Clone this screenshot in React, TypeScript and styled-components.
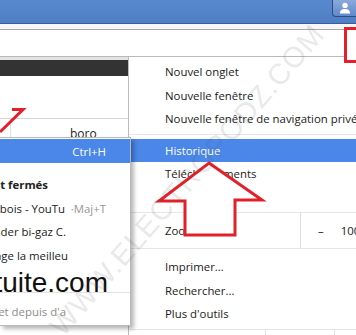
import React from "react";
import styled, { createGlobalStyle } from "styled-components";

const GlobalStyle = createGlobalStyle`
  html, body {
    margin: 0;
    padding: 0;
    background: #fff;
  }
  body {
    font-family: "Open Sans", "Noto Sans", sans-serif;
  }
`;

const MENU_FONT = 11.4;

const Window = styled.div`
  position: relative;
  width: 356px;
  height: 335px;
  overflow: hidden;
  background: #fff;
  display: flex;
  flex-direction: column;
`;

const TitleBar = styled.div`
  flex: none;
  height: 23px;
  display: flex;
  justify-content: flex-end;
  background: linear-gradient(#5888cd, #4f7ec5);
  border-bottom: 1px solid #3a5e98;
`;

const ProfileButton = styled.div`
  width: 24px;
  height: 16px;
  margin-right: -2px;
  display: flex;
  align-items: center;
  justify-content: center;
  background: linear-gradient(#8aa9dc, #6189c9);
  border: 1px solid #2c4c82;
  border-top: none;
  border-radius: 0 0 0 4px;
`;

const Toolbar = styled.div`
  flex: none;
  height: 33px;
  padding-top: 5px;
  box-sizing: border-box;
  background: #f6f7f9;
`;

const Omnibox = styled.div`
  height: 28px;
  box-sizing: border-box;
  background: #fff;
  border-top: 1px solid #a9a9a9;
  border-bottom: 1px solid #b9b9b9;
`;

const Body = styled.div`
  flex: 1;
  display: flex;
  min-height: 0;
`;

const Page = styled.div`
  flex: none;
  width: 128px;
  display: flex;
  flex-direction: column;
  background: #fff;
`;

const PageBand = styled.div`
  height: 3px;
  background: #e4e4e4;
`;

const PageHeader = styled.div`
  height: 16px;
  background: #333;
`;

const PageBlank = styled.div`
  height: 42px;
`;

const PageTable = styled.div`
  display: flex;
  border-top: 1px solid #d6d6d6;
  height: 40px;
`;

const PageCell = styled.div`
  width: 10px;
  border-right: 1px solid #e2e2e2;
`;

const PageText = styled.div`
  padding: 6px 0 0 59px;
  font-size: 12px;
  color: #222;
`;

const Menu = styled.div`
  flex: 1;
  display: flex;
  flex-direction: column;
  padding-top: 3px;
  border-left: 1px solid #bcbcbc;
  background: #fff;
  font-size: ${MENU_FONT}px;
  color: #1b1b1b;
`;

const MenuItem = styled.div<{ $active?: boolean }>`
  flex: none;
  height: 23.5px;
  display: flex;
  align-items: center;
  padding-left: 36px;
  white-space: nowrap;
  color: ${(p) => (p.$active ? "#fff" : "#1b1b1b")};
  background: ${(p) => (p.$active ? "#4a87e8" : "transparent")};
`;

const Separator = styled.div<{ $after: number }>`
  flex: none;
  height: 1px;
  background: #e6e6e6;
  margin: 3px 0 ${(p) => p.$after}px;
`;

const ZoomRow = styled.div`
  flex: none;
  height: 35px;
  display: flex;
  border-bottom: 1px solid #e6e6e6;
  margin-bottom: 6px;
`;

const ZoomLabel = styled.div`
  flex: none;
  width: 171px;
  box-sizing: border-box;
  padding-left: 36px;
  display: flex;
  align-items: center;
`;

const ZoomControls = styled.div`
  flex: 1;
  display: flex;
  align-items: center;
  gap: 17px;
  padding-left: 17px;
  border-left: 1px solid #dedede;
  white-space: nowrap;
`;

const EditRow = styled.div`
  flex: none;
  height: 30px;
  display: flex;
`;

const EditCell = styled.div<{ $w: number }>`
  flex: none;
  width: ${(p) => p.$w}px;
  border-right: 1px solid #e0e0e0;
`;

const Submenu = styled.div`
  position: absolute;
  left: 0;
  top: 137px;
  width: 131px;
  box-sizing: border-box;
  display: flex;
  flex-direction: column;
  padding: 1px 0;
  background: #fff;
  border: 1px solid #b8b8b8;
  border-left: none;
  box-shadow: 3px 3px 4px rgba(0, 0, 0, 0.28);
  font-size: ${MENU_FONT}px;
  color: #222;
`;

const SubActive = styled.div`
  height: 24px;
  display: flex;
  align-items: center;
  justify-content: flex-end;
  padding-right: 24px;
  margin-bottom: 10px;
  background: #4a87e8;
  color: #fff;
`;

const SubRow = styled.div`
  flex: none;
  height: 23.5px;
  display: flex;
  align-items: center;
  white-space: nowrap;
`;

const SubTitle = styled.div<{ $end: number; $bold?: boolean; $muted?: boolean }>`
  flex: none;
  width: ${(p) => p.$end}px;
  display: flex;
  justify-content: flex-end;
  overflow: hidden;
  font-weight: ${(p) => (p.$bold ? 700 : 400)};
  color: ${(p) => (p.$muted ? "#8c8c8c" : "#222")};
`;

const SubShortcut = styled.div`
  flex: 1;
  text-align: right;
  padding-right: 24px;
  color: #959595;
`;

const BigText = styled.div`
  flex: none;
  width: 108px;
  display: flex;
  justify-content: flex-end;
  align-self: flex-start;
  margin-top: 2px;
  font-family: "Liberation Sans", Arial, sans-serif;
  font-size: 28px;
  line-height: 28px;
  color: #111;
`;

const SubSeparator = styled.div`
  height: 1px;
  background: #e2e2e2;
  margin: 1.5px 0 7px;
`;

const Overlay = styled.svg`
  position: absolute;
  left: 0;
  top: 0;
  pointer-events: none;
`;

const Watermark = styled.div`
  position: absolute;
  left: -33px;
  top: 162px;
  width: 440px;
  text-align: center;
  transform: rotate(-49deg);
  font-family: "Liberation Sans", Arial, sans-serif;
  font-size: 29px;
  line-height: 36px;
  letter-spacing: 1px;
  color: rgba(80, 80, 80, 0.14);
  pointer-events: none;
  white-space: nowrap;
`;

const PersonIcon = () => (
  <svg width="12" height="12" viewBox="0 0 12 12">
    <circle cx="6" cy="3.4" r="2.7" fill="#fff" />
    <path d="M1 11.5 C1 8 3 7 6 7 C9 7 11 8 11 11.5 Z" fill="#fff" />
  </svg>
);

const RED = "#e3202a";

export default function App() {
  return (
    <>
      <GlobalStyle />
      <Window>
        <TitleBar>
          <ProfileButton>
            <PersonIcon />
          </ProfileButton>
        </TitleBar>
        <Toolbar>
          <Omnibox />
        </Toolbar>
        <Body>
          <Page>
            <PageBand />
            <PageHeader />
            <PageBlank />
            <PageTable>
              <PageCell />
              <PageText>boro</PageText>
            </PageTable>
          </Page>
          <Menu>
            <MenuItem>Nouvel onglet</MenuItem>
            <MenuItem>Nouvelle fenêtre</MenuItem>
            <MenuItem>Nouvelle fenêtre de navigation privée</MenuItem>
            <Separator $after={4} />
            <MenuItem $active>Historique</MenuItem>
            <MenuItem>Téléchargements</MenuItem>
            <MenuItem>Favoris</MenuItem>
            <Separator $after={0} />
            <ZoomRow>
              <ZoomLabel>Zoom</ZoomLabel>
              <ZoomControls>
                <span>–</span>
                <span>100 %</span>
              </ZoomControls>
            </ZoomRow>
            <MenuItem>Imprimer...</MenuItem>
            <MenuItem>Rechercher...</MenuItem>
            <MenuItem>Plus d'outils</MenuItem>
            <Separator $after={0} />
            <EditRow>
              <EditCell $w={136} />
              <EditCell $w={68} />
            </EditRow>
          </Menu>
        </Body>

        <Submenu>
          <SubActive>Ctrl+H</SubActive>
          <SubRow>
            <SubTitle $end={48} $bold>
              nt fermés
            </SubTitle>
          </SubRow>
          <SubRow>
            <SubTitle $end={65}>bois - YouTu</SubTitle>
            <SubShortcut>·Maj+T</SubShortcut>
          </SubRow>
          <SubRow>
            <SubTitle $end={66}>der bi-gaz C.</SubTitle>
          </SubRow>
          <SubRow>
            <SubTitle $end={68}>age la meilleu</SubTitle>
          </SubRow>
          <SubRow>
            <BigText>tuite.com</BigText>
          </SubRow>
          <SubSeparator />
          <SubRow>
            <SubTitle $end={66} $muted>
              et depuis d'a
            </SubTitle>
          </SubRow>
        </Submenu>

        <Overlay width="356" height="335" viewBox="0 0 356 335">
          <rect x="345.5" y="28.5" width="20" height="33" fill="#fff" stroke={RED} strokeWidth="3" />
          <polyline points="12,109.5 23,109.5 0,132" fill="none" stroke={RED} strokeWidth="3" />
          <polygon
            points="209,163 262,200 235,200 235,235 185,235 185,201 159,201"
            fill="#fff"
            stroke={RED}
            strokeWidth="3"
            strokeLinejoin="miter"
          />
        </Overlay>

        <Watermark>WWW.ELECTROPODZ.COM</Watermark>
      </Window>
    </>
  );
}
